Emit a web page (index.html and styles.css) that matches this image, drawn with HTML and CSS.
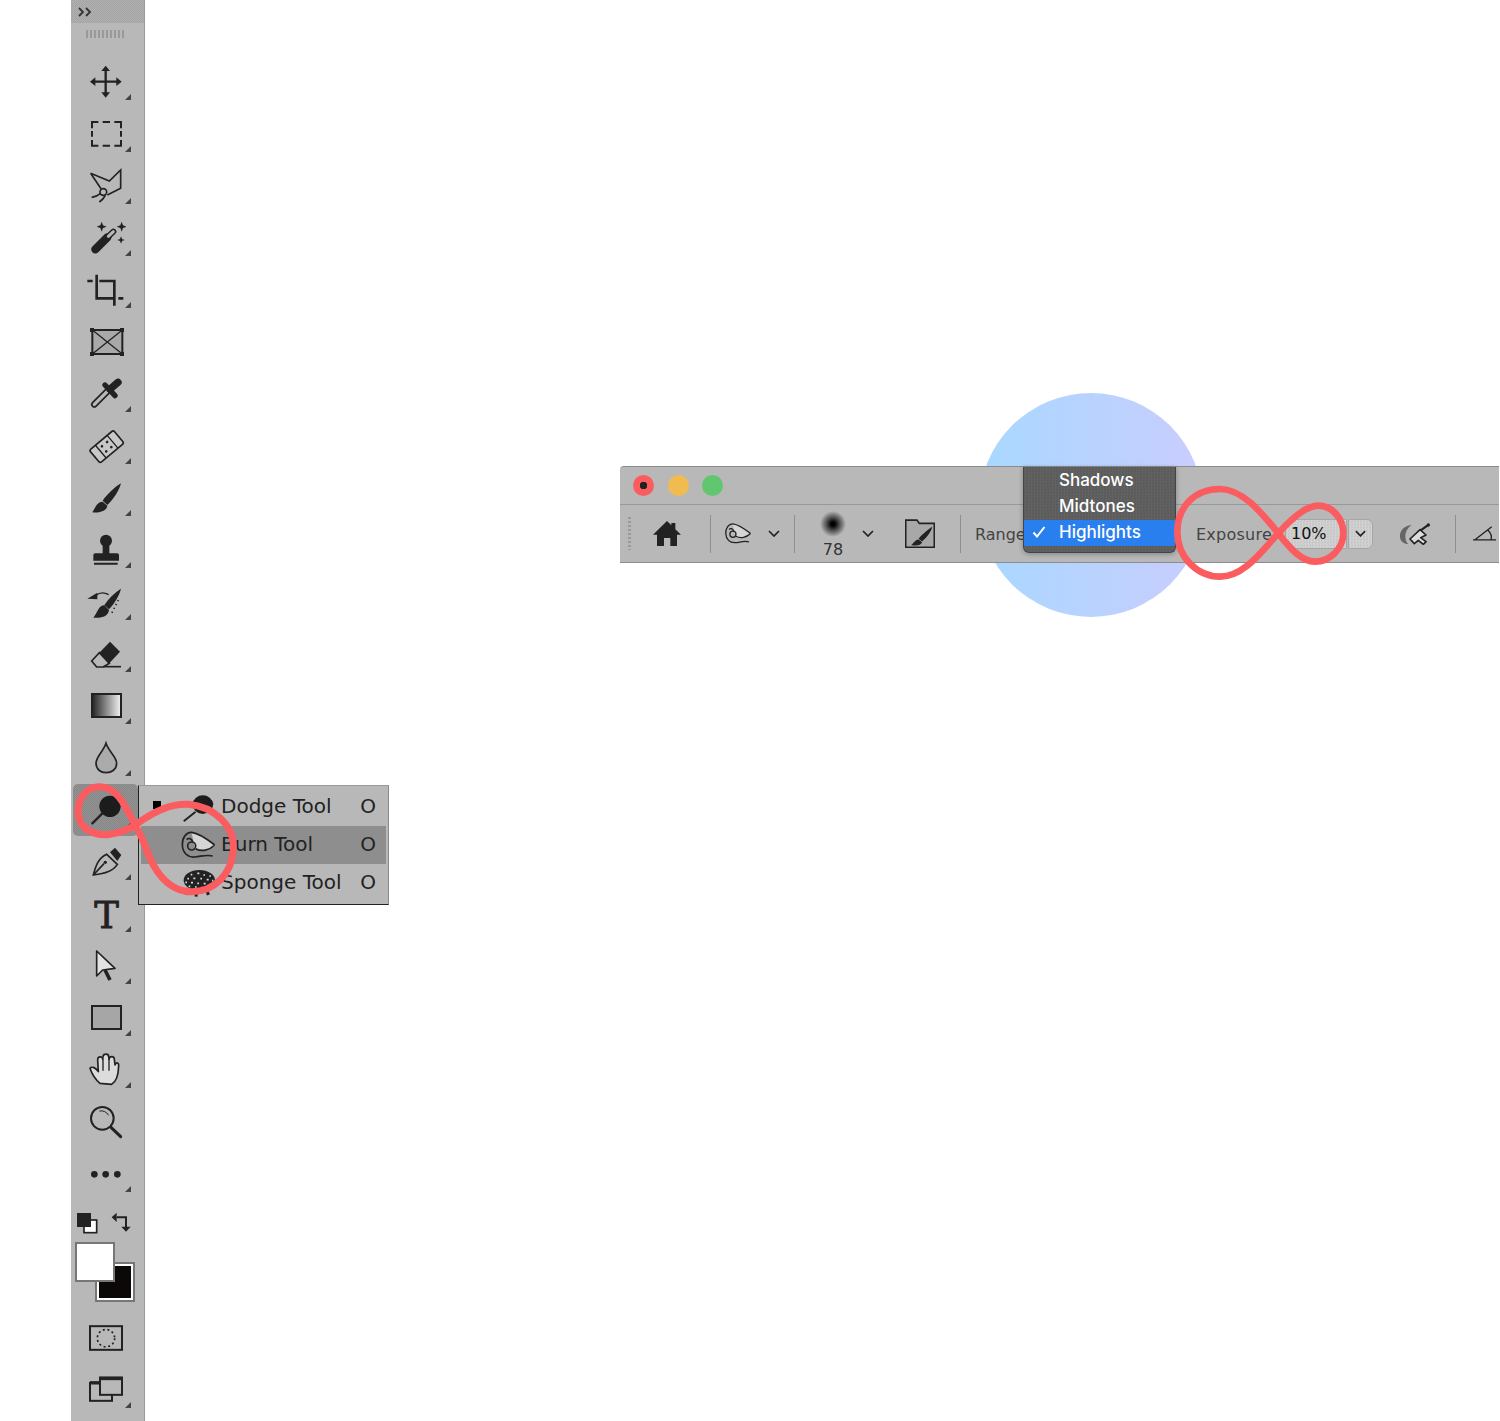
FILE: index.html
```html
<!DOCTYPE html>
<html lang="en">
<head>
  <meta charset="UTF-8" />
  <title>Dodge and Burn Tools</title>
  <link rel="stylesheet" href="styles.css">
</head>
<body>

<svg class="defs" width="0" height="0">
  <defs>
    <linearGradient id="grad-bw" x1="0" x2="1" y1="0" y2="0">
      <stop offset="0" stop-color="#222" />
      <stop offset="1" stop-color="#f4f4f4" />
    </linearGradient>
    <radialGradient id="soft-brush">
      <stop offset="0.15" stop-color="#000" />
      <stop offset="0.45" stop-color="#444" />
      <stop offset="1" stop-color="#b8b8b8" />
    </radialGradient>
    <symbol id="burn" viewBox="360 165 110 90" overflow="visible">
      <path d="M395 174C420 176 445 195 462 210C450 228 425 232 405 222Z" fill="#d6d6d6" />
      <path d="M464 210C445 195 420 175 395 172C378 171 366 190 367 210C368 232 382 248 405 246C425 244 440 238 458 243M407 221C425 231 448 226 464 210M380 194C386 188 394 190 398 200" fill="none" stroke="#222" stroke-width="5" />
      <circle cx="395" cy="213" r="12" fill="none" stroke="#222" stroke-width="5" />
    </symbol>
  </defs>
</svg>

<div class="page">

  <aside class="toolbar">
    <div class="collapse-bar">
      <svg width="14" height="10" viewBox="0 0 14 10"><path d="M1 1l4 4-4 4M8 1l4 4-4 4" fill="none" stroke="#333" stroke-width="1.8" /></svg>
    </div>
    <div class="grip"></div>

    <div class="tools">
      <div class="tool more">
        <svg class="ico" viewBox="78 186 120 120"><path d="M137 210V280M102 245H172" stroke="#222" stroke-width="7" fill="none" /><path d="M137 197l-13 16h26zM137 293l-13-16h26zM90 245l16-13v26zM185 245l-16-13v26z" fill="#222" /></svg>
      </div>
      <div class="tool more">
        <svg class="ico" viewBox="78 342 120 120"><path d="M96 385V366H115M128 366H150M163 366H183V385M96 393V410M183 393V410M96 420V437H115M128 437H150M163 437H183V420" fill="none" stroke="#222" stroke-width="6" /></svg>
      </div>
      <div class="tool more">
        <svg class="ico" viewBox="78 498 120 120"><path d="M92 520L148 543L182 510V565L142 585M92 520L123 566M95 592Q110 590 122 580M118 606Q130 598 136 586" fill="none" stroke="#222" stroke-width="5" /><circle cx="130" cy="576" r="10" fill="none" stroke="#222" stroke-width="5" /></svg>
      </div>
      <div class="tool more">
        <svg class="ico" viewBox="78 654 120 120"><path d="M106 748L142 712" stroke="#222" stroke-width="25" stroke-linecap="round" /><path d="M142 712L160 695" stroke="#222" stroke-width="18" stroke-linecap="round" /><path d="M145 709L160 695" stroke="#b8b8b8" stroke-width="9" stroke-linecap="round" /><path d="M125 665l4 11 11 4-11 4-4 11-4-11-11-4 11-4zM185 665l4 11 11 4-11 4-4 11-4-11-11-4 11-4zM183 709l3 8 8 3-8 3-3 8-3-8-8-3 8-3z" fill="#222" /></svg>
      </div>
      <div class="tool more">
        <svg class="ico" viewBox="78 0 120 120"><path d="M82 33H98M110 14V85H160M118 33H163V107M175 85H190" fill="none" stroke="#222" stroke-width="8" /></svg>
      </div>
      <div class="tool">
        <svg class="ico" viewBox="78 156 120 120"><rect x="97" y="180" width="90" height="72" fill="#a9a9a9" stroke="#222" stroke-width="6" /><path d="M97 180L187 252M187 180L97 252" stroke="#222" stroke-width="4" /><path d="M90 174h12v12H90zM180 174h12v12h-12zM90 246h12v12H90zM180 246h12v12h-12z" fill="#222" /></svg>
      </div>
      <div class="tool more">
        <svg class="ico" viewBox="78 312 120 120"><path d="M103 403L145 361" stroke="#222" stroke-width="20" stroke-linecap="round" /><path d="M103 403L145 361" stroke="#b8b8b8" stroke-width="10" stroke-linecap="round" /><path d="M135 345L165 377" stroke="#222" stroke-width="16" stroke-linecap="round" /><path d="M150 358L174 337" stroke="#222" stroke-width="22" stroke-linecap="round" /></svg>
      </div>
      <div class="tool more">
        <svg class="ico" viewBox="78 468 120 120"><g transform="rotate(-40 140 530)"><rect x="93" y="505" width="94" height="50" rx="6" fill="#c8c8c8" stroke="#222" stroke-width="5" /><path d="M117 505V555M163 505V555" stroke="#222" stroke-width="4" /><circle cx="130" cy="520" r="4" fill="#222" /><circle cx="150" cy="520" r="4" fill="#222" /><circle cx="130" cy="540" r="4" fill="#222" /><circle cx="150" cy="540" r="4" fill="#222" /></g></svg>
      </div>
      <div class="tool more">
        <svg class="ico" viewBox="78 624 120 120"><path d="M183 640C165 650 140 675 128 692L142 705C160 690 178 660 183 640ZM128 695C110 695 105 715 97 727C120 730 140 722 142 707Z" fill="#222" /></svg>
      </div>
      <div class="tool more">
        <svg class="ico" viewBox="78 0 120 120"><circle cx="138" cy="32" r="18" fill="#222" /><path d="M128 42h20v30h-20zM100 76q0-6 6-6h65q6 0 6 6v16h-77zM102 98h71v6h-71z" fill="#222" /></svg>
      </div>
      <div class="tool more">
        <svg class="ico" viewBox="78 156 120 120"><path d="M183 176C165 186 145 208 133 225L147 238C162 222 178 198 183 176ZM133 226C115 226 112 250 100 263C125 266 145 258 147 240ZM82 206L112 188V208Z" fill="#222" /><path d="M108 196Q125 182 146 194" fill="none" stroke="#222" stroke-width="4" /><path d="M175 210L155 250" stroke="#222" stroke-width="5" stroke-dasharray="4 9" fill="none" /></svg>
      </div>
      <div class="tool more">
        <svg class="ico" viewBox="78 312 120 120"><path d="M150 335L180 365L148 400L118 368Z" fill="#222" /><path d="M118 368L148 400L130 411H110L95 393Z" fill="#b8b8b8" stroke="#222" stroke-width="5" /><path d="M130 410H183" stroke="#222" stroke-width="5" /></svg>
      </div>
      <div class="tool more">
        <svg class="ico" viewBox="78 468 120 120"><rect x="96" y="492" width="87" height="69" fill="url(#grad-bw)" stroke="#222" stroke-width="6" /></svg>
      </div>
      <div class="tool more">
        <svg class="ico" viewBox="78 624 120 120"><path d="M138 640C130 665 108 680 108 700C108 718 122 728 138 728C155 728 170 718 170 700C170 680 146 665 138 640Z" fill="#ababab" stroke="#222" stroke-width="5" /></svg>
      </div>

      <div class="tool more active">
        <svg class="ico" viewBox="78 45 120 120"><circle cx="150" cy="94" r="32" fill="#1c1c1c" /><path d="M127 115L97 145" stroke="#222" stroke-width="7" stroke-linecap="round" /></svg>

        <div class="flyout">
          <div class="flyout-row">
            <span class="bullet"></span>
            <svg class="row-ico" viewBox="360 39 108 114"><path d="M397 87a32 32 0 0 1 63 0a32 32 0 0 1-32 30a32 32 0 0 1-31-30Z" fill="#1c1c1c" /><path d="M405 112L373 137" stroke="#222" stroke-width="6" stroke-linecap="round" /></svg>
            <span class="row-label">Dodge Tool</span>
            <span class="row-key">O</span>
          </div>
          <div class="flyout-row current">
            <span class="bullet blank"></span>
            <svg class="row-ico" viewBox="360 153 108 114"><use href="#burn" x="360" y="165" width="110" height="90" /></svg>
            <span class="row-label">Burn Tool</span>
            <span class="row-key">O</span>
          </div>
          <div class="flyout-row">
            <span class="bullet blank"></span>
            <svg class="row-ico" viewBox="360 267 108 114"><ellipse cx="418" cy="316" rx="47" ry="31" fill="#222" /><path d="M385 340l-5 20M410 345l-2 20M440 342l5 18" stroke="#222" stroke-width="9" /><path d="M392 299h5M412 295h6M430 300h5M448 303h5M382 311h5M400 310h6M421 311h5M440 314h6M456 317h4M376 322h5M393 323h6M412 325h5M431 326h6M449 329h5M386 334h5M405 336h5M423 338h5" stroke="#d8d8d8" stroke-width="5" fill="none" /></svg>
            <span class="row-label">Sponge Tool</span>
            <span class="row-key">O</span>
          </div>
        </div>
      </div>

      <div class="tool more">
        <svg class="ico" viewBox="78 201 120 120"><path d="M100 300C108 270 115 250 140 238L172 268C158 290 135 295 100 300ZM100 300L132 266" fill="none" stroke="#222" stroke-width="5" /><circle cx="136" cy="262" r="5" fill="#222" /><path d="M150 232L165 218L184 240L172 258Z" fill="#222" /></svg>
      </div>
      <div class="tool more">
        <span class="t-glyph">T</span>
      </div>
      <div class="tool more">
        <svg class="ico" viewBox="78 18 120 120"><path d="M135 90L150 120" stroke="#222" stroke-width="11" /><path d="M110 33V108L128 90L165 85Z" fill="#e2e2e2" stroke="#222" stroke-width="5" stroke-linejoin="round" /></svg>
      </div>
      <div class="tool more">
        <svg class="ico" viewBox="78 174 120 120"><rect x="96" y="198" width="87" height="69" fill="#a6a6a6" stroke="#222" stroke-width="6" /></svg>
      </div>
      <div class="tool more">
        <svg class="ico" viewBox="78 330 120 120"><path d="M120 430C105 418 95 400 90 385C95 378 108 383 115 395L113 360C113 348 128 348 128 358L129 350C130 340 146 340 146 350L147 358C148 347 163 347 163 358L165 375C168 365 177 368 176 378C175 405 170 425 155 433Z" fill="#dcdcdc" stroke="#222" stroke-width="5" stroke-linejoin="round" /><path d="M129 358V392M147 358V392" stroke="#222" stroke-width="4" /></svg>
      </div>
      <div class="tool">
        <svg class="ico" viewBox="78 486 120 120"><circle cx="127" cy="535" r="34" fill="none" stroke="#222" stroke-width="6" /><path d="M153 562L182 590" stroke="#222" stroke-width="9" stroke-linecap="round" /><path d="M118 513Q136 510 146 526" fill="none" stroke="#222" stroke-width="3" /></svg>
      </div>
      <div class="tool more">
        <svg class="ico" viewBox="78 642 120 120"><circle cx="103" cy="703" r="10" fill="#222" /><circle cx="137" cy="703" r="10" fill="#222" /><circle cx="172" cy="703" r="10" fill="#222" /></svg>
      </div>
    </div>

    <div class="colors">
      <svg class="color-tools" viewBox="33 60 219 72"><rect x="72" y="90" width="38" height="38" fill="#fff" stroke="#222" stroke-width="5" /><rect x="51" y="69" width="42" height="42" fill="#222" /><path d="M170 82H198V112" fill="none" stroke="#222" stroke-width="6" /><path d="M155 82L170 68V96ZM184 110H212L198 125Z" fill="#222" /></svg>
      <div class="swatches">
        <div class="swatch bg"></div>
        <div class="swatch fg"></div>
      </div>
    </div>

    <div class="mode-btn">
      <svg width="34" height="26" viewBox="87 405 102 77"><rect x="90" y="408" width="96" height="71" fill="none" stroke="#222" stroke-width="6" /><circle cx="138" cy="444" r="26" fill="none" stroke="#222" stroke-width="5" stroke-dasharray="6 8" /></svg>
    </div>
    <div class="mode-btn screen more">
      <svg width="34" height="26" viewBox="87 558 102 77"><rect x="90" y="578" width="66" height="54" fill="none" stroke="#222" stroke-width="6" /><path d="M90 578h30" stroke="#222" stroke-width="10" /><rect x="120" y="562" width="66" height="52" fill="#b8b8b8" stroke="#222" stroke-width="6" /><path d="M120 565h66" stroke="#222" stroke-width="10" /></svg>
    </div>
  </aside>

  <main class="stage">
    <div class="window">
      <div class="glow"></div>

      <div class="titlebar">
        <span class="light red"></span>
        <span class="light yellow"></span>
        <span class="light green"></span>
      </div>

      <div class="options">
        <div class="opt-grip"></div>
        <svg class="home" width="28" height="25" viewBox="113 197 84 75"><path d="M155 197L113 238H125V272H146V248H165V272H185V238H197L180 222V203H168V210Z" fill="#222" /></svg>
        <div class="sep home-sep"></div>
        <svg class="burn-preset" width="28" height="23"><use href="#burn" /></svg>
        <svg class="caret" width="12" height="7" viewBox="0 0 12 7"><path d="M1 1l5 5 5-5" fill="none" stroke="#222" stroke-width="1.7" /></svg>
        <div class="sep preset-sep"></div>
        <div class="brush-size">
          <svg width="26" height="26" viewBox="0 0 26 26"><circle cx="13" cy="13" r="13" fill="url(#soft-brush)" /></svg>
          <span>78</span>
        </div>
        <svg class="caret size-caret" width="12" height="7" viewBox="0 0 12 7"><path d="M1 1l5 5 5-5" fill="none" stroke="#222" stroke-width="1.7" /></svg>
        <svg class="folder" width="30" height="29" viewBox="870 192 88 85"><path d="M872 195H905L912 205H956V275H872Z" fill="#a8a8a8" stroke="#222" stroke-width="5" /><path d="M950 215C935 225 918 240 910 250L920 258C932 248 946 232 950 215ZM910 252C900 252 897 262 888 268C905 272 918 268 920 260Z" fill="#222" /></svg>
        <div class="sep folder-sep"></div>
        <span class="opt-label range">Range</span>
        <span class="opt-label exposure">Exposure</span>
        <div class="percent">10%</div>
        <div class="stepper">
          <svg width="11" height="7" viewBox="0 0 12 7"><path d="M1 1l5 5 5-5" fill="none" stroke="#222" stroke-width="1.8" /></svg>
        </div>
        <svg class="airbrush" width="32" height="22" viewBox="687 172 96 66"><path d="M725 178C695 180 685 205 692 222C697 232 708 236 715 235C703 225 700 195 725 178Z" fill="#666" /><path d="M720 220L750 192L768 208L752 216L768 228L760 236L745 224L733 234Z" fill="#dcdcdc" stroke="#222" stroke-width="5" stroke-linejoin="round" /><path d="M752 194L772 180" stroke="#222" stroke-width="7" /><circle cx="775" cy="178" r="5" fill="#222" /></svg>
        <div class="sep air-sep"></div>
        <svg class="angle" width="23" height="15" viewBox="905 183 70 45"><path d="M905 225H975M910 225L962 185M950 195Q965 210 960 225" fill="none" stroke="#222" stroke-width="4" /></svg>
      </div>

      <div class="range-menu">
        <div class="range-item">Shadows</div>
        <div class="range-item">Midtones</div>
        <div class="range-item selected">
          <svg class="check" width="14" height="12" viewBox="0 0 14 12"><path d="M1.5 6.5L5 10.5L12.5 1" fill="none" stroke="#fff" stroke-width="2" /></svg>
          Highlights
        </div>
      </div>

      <svg class="loop loop-right" viewBox="0 0 990 360"><path d="M325 205C280 150 220 72 150 72C70 72 22 130 22 200C22 280 85 335 150 335C220 335 270 265 325 205C365 160 410 122 445 122C490 122 520 165 520 205C520 250 480 290 435 290C395 290 360 250 325 205Z" /></svg>
    </div>
  </main>

  <svg class="loop loop-left" viewBox="0 0 1020 510"><path d="M225 150C195 90 170 32 115 35C70 38 50 85 55 120C60 165 110 185 150 178C185 172 215 160 240 140C290 105 340 85 385 88C460 95 525 150 520 225C515 300 460 350 395 350C320 350 280 280 260 225C250 195 240 175 225 150Z" /></svg>

</div>

</body>
</html>
```

FILE: styles.css
```css
html { margin: 0; background: #fff; }
body {
  margin: 0;
  width: 1500px;
  height: 1421px;
  overflow: hidden;
  font-family: "DejaVu Sans", sans-serif;
  color: #333;
}
.defs { position: absolute; }
.page {
  position: relative;
  display: flex;
  height: 1421px;
}

/* left tool column */
.toolbar {
  flex: none;
  width: 73px;
  margin-left: 71px;
  background: #b8b8b8;
  border-right: 1px solid #999;
  display: flex;
  flex-direction: column;
}
.collapse-bar {
  height: 23px;
  padding: 7px 0 0 7px;
  box-sizing: border-box;
  background: repeating-conic-gradient(#a2a2a2 0 25%, #b2b2b2 0 50%) 0 0 / 2px 2px;
}
.collapse-bar svg { display: block; }
.grip {
  width: 40px;
  height: 8px;
  margin: 7px 0 0 15px;
  background: repeating-linear-gradient(90deg, #999 0 2px, #b8b8b8 2px 4px);
}
.tools { margin-top: 18px; }
.tool {
  position: relative;
  height: 52px;
  padding: 6px 0 0 15px;
  box-sizing: border-box;
}
.more::after {
  content: "";
  position: absolute;
  left: 54px;
  top: 38px;
  border-style: solid;
  border-width: 0 0 6px 6px;
  border-color: transparent transparent #444 transparent;
}
.ico { display: block; width: 40px; height: 40px; }
.t-glyph {
  display: block;
  width: 41px;
  height: 40px;
  font-family: "DejaVu Serif", serif;
  font-size: 37px;
  line-height: 43px;
  text-align: center;
  color: #222;
  -webkit-text-stroke: 0.8px #222;
}

.tool.active {
  margin: 0 6px 0 2px;
  padding-left: 13px;
  border-radius: 5px;
  background: repeating-conic-gradient(#888 0 25%, #929292 0 50%) 0 0 / 2px 2px;
}
.tool.active::after { left: 52px; }

/* flyout with dodge / burn / sponge */
.flyout {
  position: absolute;
  left: 65px;
  top: 1px;
  z-index: 2;
  width: 251px;
  height: 120px;
  box-sizing: border-box;
  padding: 2px;
  background: #b8b8b8;
  border-left: 1px solid #222;
  border-bottom: 1px solid #222;
  border-top: 1px solid #999;
  border-right: 1px solid #888;
}
.flyout-row {
  display: flex;
  align-items: center;
  height: 38px;
  font-size: 20px;
  color: #222;
}
.flyout-row.current { background: #8e8e8e; }
.bullet {
  flex: none;
  width: 8px;
  height: 8px;
  margin: 0 19px 5px 12px;
  background: #000;
}
.bullet.blank { background: none; }
.row-ico { flex: none; width: 36px; height: 38px; overflow: visible; }
.row-label { margin-left: 5px; flex: 1; white-space: nowrap; padding-bottom: 2px; }
.row-key { margin-right: 10px; padding-bottom: 2px; }

/* bottom of the tool column */
.colors { margin-top: 10px; }
.color-tools { display: block; width: 73px; height: 24px; }
.swatches {
  display: grid;
  width: 60px;
  height: 60px;
  margin: 8px 0 0 4px;
}
.swatch {
  grid-area: 1 / 1;
  width: 40px;
  height: 40px;
  box-sizing: border-box;
  border: 2px solid #777;
}
.swatch.fg { justify-self: start; align-self: start; background: #fff; }
.swatch.bg {
  justify-self: end;
  align-self: end;
  background: #0c0808;
  box-shadow: inset 0 0 0 2px #fff;
}
.mode-btn { position: relative; height: 26px; margin: 23px 0 0 18px; }
.mode-btn svg { display: block; }
.mode-btn.screen { margin-top: 25px; }
.mode-btn.more::after { left: 36px; top: 26px; }

/* options window */
.stage {
  flex: 1;
  padding: 466px 0 0 475px;
}
.window {
  position: relative;
  height: 97px;
  margin-right: 1px;
  box-sizing: border-box;
  background: #b8b8b8;
  border-top: 1px solid #8c8c8c;
  border-bottom: 1px solid #8c8c8c;
  border-top-left-radius: 4px;
}
.glow {
  position: absolute;
  left: 359px;
  top: -74px;
  z-index: -1;
  width: 224px;
  height: 224px;
  border-radius: 50%;
  background: linear-gradient(90deg, #a8d8ff, #c9cdfe);
}
.titlebar {
  display: flex;
  align-items: center;
  gap: 13.5px;
  height: 38px;
  padding-left: 13px;
  box-sizing: border-box;
  border-bottom: 1px solid #999;
}
.light {
  width: 21px;
  height: 21px;
  border-radius: 50%;
}
.light.red {
  background: radial-gradient(circle, #222 0 3.5px, #fb5c5e 4px);
}
.light.yellow { background: #f0bc50; }
.light.green { background: #60c670; }

.options {
  display: flex;
  align-items: center;
  height: 57px;
  padding-left: 8px;
  font-size: 16px;
}
.options > * { flex: none; }
.opt-grip {
  width: 3px;
  height: 33px;
  background: repeating-linear-gradient(180deg, #999 0 2px, #b8b8b8 2px 4px);
}
.home { margin-left: 22px; }
.sep { width: 1px; height: 38px; background: #8f8f8f; }
.home-sep { margin-left: 29px; }
.burn-preset { margin-left: 13px; }
.caret { margin-left: 16px; }
.preset-sep { margin-left: 14px; }
.brush-size {
  display: flex;
  flex-direction: column;
  align-items: center;
  width: 26px;
  margin-left: 25px;
  padding-top: 3px;
  font-size: 16px;
  line-height: 20px;
}
.brush-size svg { display: block; }
.brush-size span { margin-top: 3px; }
.size-caret { margin-left: 16px; }
.folder { margin-left: 31px; }
.folder-sep { margin-left: 25px; }
.opt-label { white-space: nowrap; color: #444; margin-top: 2px; }
.range { width: 221px; margin-left: 14px; }
.exposure { width: 89px; letter-spacing: 0.25px; }
.percent {
  width: 62px;
  height: 30px;
  box-sizing: border-box;
  padding-left: 5px;
  line-height: 28px;
  color: #111;
  border: 1px solid #a6a6a6;
  border-radius: 6px 0 0 6px;
  background: repeating-conic-gradient(#d2d2d2 0 25%, #c6c6c6 0 50%) 0 0 / 3px 3px;
}
.stepper {
  display: flex;
  align-items: center;
  justify-content: center;
  width: 25px;
  height: 30px;
  margin-left: 1px;
  box-sizing: border-box;
  border: 1px solid #a6a6a6;
  border-radius: 0 6px 6px 0;
  background: repeating-conic-gradient(#d2d2d2 0 25%, #c6c6c6 0 50%) 0 0 / 3px 3px;
}
.airbrush { margin-left: 26px; }
.air-sep { margin-left: 24px; }
.angle { margin-left: 17px; }

/* range dropdown over the bar */
.range-menu {
  position: absolute;
  left: 403px;
  top: 0;
  width: 153px;
  height: 86px;
  box-sizing: border-box;
  padding-top: 1px;
  background: repeating-conic-gradient(#626262 0 25%, #5a5a5a 0 50%) 0 0 / 3px 3px;
  border: 1px solid #444;
  border-top: none;
  border-radius: 0 0 6px 6px;
  box-shadow: 0 1px 5px rgba(0, 0, 0, 0.3);
  font-family: Inter, sans-serif;
  font-size: 17px;
  font-weight: 500;
  color: #fff;
}
.range-item {
  position: relative;
  height: 26px;
  padding-left: 35px;
  line-height: 24px;
}
.range-item.selected { background: #2a7fef; }
.check { position: absolute; left: 8px; top: 6px; }

/* red figure-eight marks */
.loop {
  position: absolute;
  z-index: 3;
  fill: none;
  stroke: #fb5c5f;
  overflow: visible;
}
.loop-left {
  left: 60px;
  top: 775px;
  width: 340px;
  height: 170px;
  stroke-width: 21;
}
.loop-right {
  left: 550px;
  top: -2px;
  width: 330px;
  height: 120px;
  stroke-width: 20;
}
```
